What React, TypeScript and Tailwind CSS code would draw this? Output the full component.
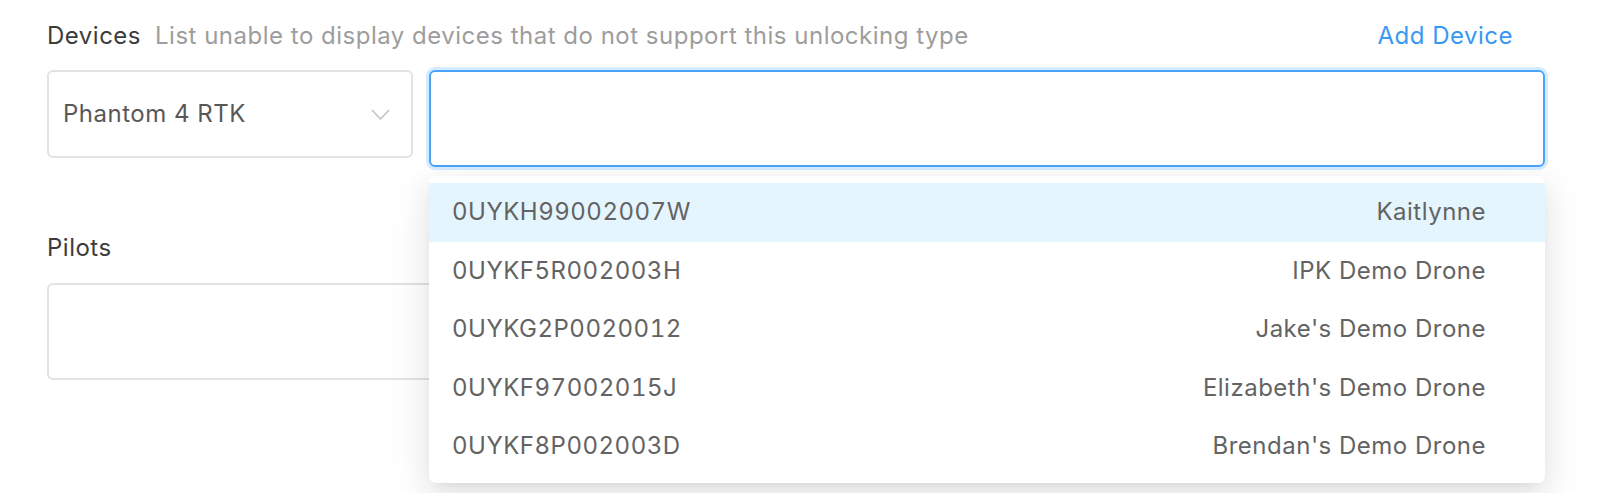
import { useState } from 'react'

const devices = [
  { sn: '0UYKH99002007W', name: 'Kaitlynne' },
  { sn: '0UYKF5R002003H', name: 'IPK Demo Drone' },
  { sn: '0UYKG2P0020012', name: "Jake's Demo Drone" },
  { sn: '0UYKF97002015J', name: "Elizabeth's Demo Drone" },
  { sn: '0UYKF8P002003D', name: "Brendan's Demo Drone" },
]

export default function App() {
  const [active] = useState(0)

  return (
    <div className="min-h-[493px] w-full bg-white pl-[47px] pt-[19px] font-['Inter',sans-serif] text-[24px] tracking-[0.5px]">
      <div className="w-[1498px]">
        <div className="flex h-[33px] items-center justify-between leading-[33px]">
          <p className="whitespace-nowrap">
            <span className="text-[#3c3c3c]">Devices</span>
            <span className="ml-[14px] text-[#9d9d9d]">
              List unable to display devices that do not support this unlocking type
            </span>
          </p>
          <a className="mr-[32px] cursor-pointer whitespace-nowrap text-[#3a98f5]">Add Device</a>
        </div>

        <div className="mt-[18px] flex items-start gap-[16px]">
          <div className="flex h-[88px] w-[366px] items-center justify-between rounded-[6px] border-2 border-[#e2e2e2] pl-[14px] pr-[21px]">
            <span className="text-[#585858]">Phantom 4 RTK</span>
            <svg width="19" height="11" viewBox="0 0 19 11" fill="none">
              <path d="M1 1l8.5 9L18 1" stroke="#c4c4c4" strokeWidth="1.6" />
            </svg>
          </div>

          <div className="relative flex-1">
            <div className="h-[97px] rounded-[6px] border-2 border-[#4aa3fb] shadow-[0_0_0_3px_rgba(24,144,255,0.18)]" />

            <div className="absolute left-0 right-0 top-full z-10 mt-[9px] rounded-[7px] bg-white py-[7px] shadow-[0_6px_12px_-8px_rgba(0,0,0,0.12),0_10px_28px_0_rgba(0,0,0,0.08),0_14px_44px_12px_rgba(0,0,0,0.04)]">
              {devices.map((d, i) => (
                <div
                  key={d.sn}
                  className={
                    i === active
                      ? 'flex h-[58.5px] items-center justify-between bg-[#e5f5fe] pl-[23px] pr-[59px] text-[#636363]'
                      : 'flex h-[58.5px] items-center justify-between pl-[23px] pr-[59px] text-[#636363]'
                  }
                >
                  <span className="tabular-nums">{d.sn}</span>
                  <span>{d.name}</span>
                </div>
              ))}
            </div>
          </div>
        </div>

        <p className="mt-[64px] h-[33px] leading-[33px] text-[#3c3c3c]">Pilots</p>
        <div className="mt-[19px] h-[97px] w-full rounded-[6px] border-2 border-[#e2e2e2]" />
      </div>
    </div>
  )
}
